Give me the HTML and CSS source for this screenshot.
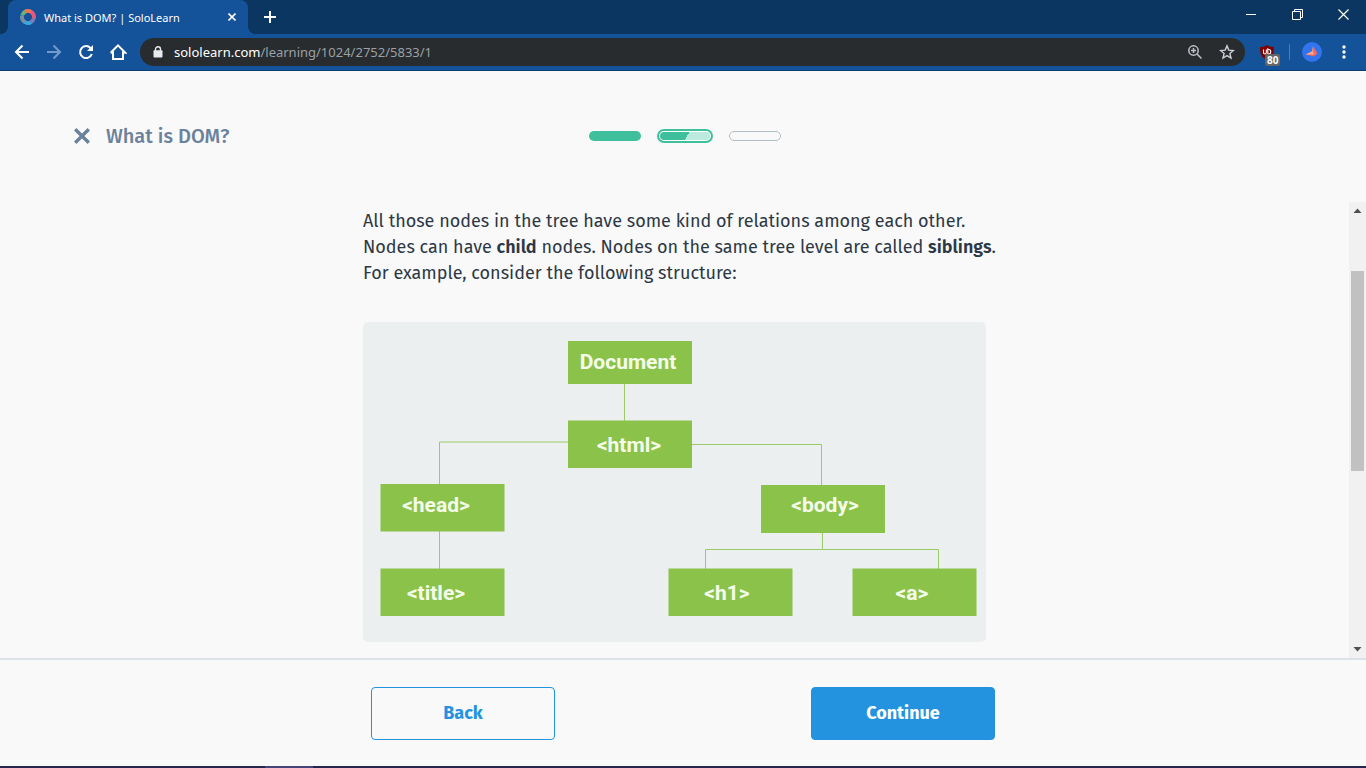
FILE: index.html
```html
<!DOCTYPE html>
<html lang="en">
<head>
<meta charset="utf-8">
<meta name="viewport" content="width=device-width, initial-scale=1">
<title>What is DOM? | SoloLearn</title>
<link rel="stylesheet" href="styles.css">
</head>
<body class="window">
<div class="tabstrip">
  <div class="tab">
    <svg class="tab-icon" width="16" height="16" viewBox="0 0 16 16" fill="none" stroke-width="3.600" aria-hidden="true">
      <circle cx="8" cy="8" r="6" stroke="#59809c"/>
      <path d="M2.4 6A6 6 0 0 1 7 2.1" stroke="#62b878"/>
      <path d="M5 2.8A6 6 0 0 1 12 3.6" stroke="#ee7455"/>
      <path d="M11 2.9A6 6 0 0 1 13.8 9.4" stroke="#e9577f"/>
      <path d="M13.7 9.8A6 6 0 0 1 9.8 13.7" stroke="#8277b9"/>
      <path d="M10.8 13.3A6 6 0 0 1 4 12.5" stroke="#36a9e1"/>
      <path d="M4.6 12.9A6 6 0 0 1 2 7" stroke="#7c8f9f"/>
    </svg>
    <span class="tab-title">What is DOM? | SoloLearn</span>
    <button class="tab-close" aria-label="Close tab">
      <svg width="8" height="8" viewBox="0 0 8 8" stroke="#fff" stroke-width="1.6"><path d="M0.5 0.5l7 7M7.5 0.5l-7 7"/></svg>
    </button>
  </div>
  <button class="tab-new" aria-label="New tab">
    <svg width="12" height="12" viewBox="0 0 12 12" stroke="#fff" stroke-width="2"><path d="M6 0v12M0 6h12"/></svg>
  </button>
  <div class="window-controls">
    <button class="window-button" aria-label="Minimize"><svg width="11" height="11" viewBox="0 0 11 11" stroke="#fff"><path d="M0 5.5h10"/></svg></button>
    <button class="window-button" aria-label="Restore"><svg width="11" height="11" viewBox="0 0 11 11" fill="none" stroke="#fff"><path d="M0.5 2.5h8v8h-8zM2.5 2.5v-2h8v8h-2"/></svg></button>
    <button class="window-button" aria-label="Close"><svg width="11" height="11" viewBox="0 0 11 11" stroke="#fff" stroke-width="1.2"><path d="M0.5 0.5l10 10M10.5 0.5l-10 10"/></svg></button>
  </div>
</div>

<div class="toolbar">
  <button class="tool" aria-label="Go back"><svg width="16" height="16" viewBox="0 0 16 16" fill="none" stroke="#fff" stroke-width="2"><path d="M15 8H2.5M8.5 1.5L2 8l6.500 6.500"/></svg></button>
  <button class="tool" aria-label="Go forward"><svg width="16" height="16" viewBox="0 0 16 16" fill="none" stroke="#739acc" stroke-width="2"><path d="M1 8h12.500M7.500 1.500L14 8l-6.500 6.500"/></svg></button>
  <button class="tool" aria-label="Reload"><svg width="16" height="16" viewBox="0 0 16 16" fill="none" stroke="#fff" stroke-width="2"><path d="M13.800 10A6 6 0 1 1 12.600 4.100"/><path d="M15 1v6H9z" fill="#fff" stroke="none"/></svg></button>
  <button class="tool" aria-label="Home"><svg width="18" height="18" viewBox="0 0 18 18" fill="none" stroke="#fff" stroke-width="2"><path d="M4 8.500V16h10V8.500M1.700 9.700L9 2.400l7.300 7.300H14M1.700 9.700H4"/></svg></button>
  <div class="address">
    <svg class="lock" width="10" height="12" viewBox="0 0 10 12" aria-hidden="true"><path d="M2.500 5V3.200a2.500 2.500 0 0 1 5 0V5" fill="none" stroke="#e8eaed" stroke-width="1.400"/><rect x="0.500" y="4.300" width="9" height="7.200" rx="1" fill="#e8eaed"/></svg>
    <div class="url" role="textbox" aria-label="Address" contenteditable="true" spellcheck="false"><span class="url-host">sololearn.com</span>/learning/1024/2752/5833/1</div>
    <button class="tool" aria-label="Zoom"><svg width="14" height="14" viewBox="0 0 14 14" fill="none" stroke="#bdc1c6" stroke-width="1.500"><circle cx="5.500" cy="5.500" r="4.700"/><path d="M9 9l4.500 4.500M5.500 3v5M3 5.500h5"/></svg></button>
    <button class="tool" aria-label="Bookmark this page"><svg width="16" height="16" viewBox="0 0 16 16" fill="none" stroke="#cdd0d4" stroke-width="1.400"><path d="M8 1.900l1.800 4.200 4.600.4-3.500 3 1.100 4.500L8 11.600 4 14l1.100-4.500-3.500-3 4.600-.4z"/></svg></button>
  </div>
  <button class="tool extension" aria-label="uBlock Origin">
    <svg width="14" height="15" viewBox="0 0 14 15"><path d="M7 0c2 1.500 4 2 7 2 0 7-1 10-7 13C1 12 0 9 0 2c3 0 5-.5 7-2z" fill="#800000"/><path d="M3.500 4.500v3q0 1.500 1.400 1.500T6.300 7.500v-3M7.800 4v5h1q2 0 2-2.200T8.800 4.500z" fill="none" stroke="#fff" stroke-width="1.100"/></svg>
    <span class="badge">80</span>
  </button>
  <span class="divider"></span>
  <button class="tool" aria-label="Profile"><svg width="20" height="20" viewBox="0 0 20 20"><circle cx="10" cy="10" r="10" fill="#3273ee"/><path d="M11 4l-1.500 7 2.500 2z" fill="#ff9b83"/><path d="M3.500 12.500L10 9.500l2 5z" fill="#ef6262"/><path d="M11 4l4.500 7.500-3.500 3z" fill="#ef6a66"/><path d="M3.500 12.500l6.500-3 2 3z" fill="#ffb09a"/></svg></button>
  <button class="tool" aria-label="Menu"><svg width="4" height="14" viewBox="0 0 4 14" fill="#fff"><circle cx="2" cy="2" r="1.700"/><circle cx="2" cy="7" r="1.700"/><circle cx="2" cy="12" r="1.700"/></svg></button>
</div>

<header class="lesson-header">
  <div class="lesson-title">
    <button class="lesson-close" aria-label="Close lesson"><svg width="16" height="16" viewBox="0 0 16 16" stroke="#6b829c" stroke-width="3.400"><path d="M1.200 1.200l13.600 13.600M14.800 1.200L1.200 14.800"/></svg></button>
    <h1 class="lesson-name">What is DOM?</h1>
  </div>
  <div class="steps">
    <span class="step step-done"></span>
    <span class="step-ring"><span class="step step-current"></span></span>
    <span class="step step-next"></span>
  </div>
</header>

<div class="scroll-area">
  <main class="lesson">
    <p class="lesson-text">All those nodes in the tree have some kind of relations among each other.<br>Nodes can have <b>child</b> nodes. Nodes on the same tree level are called <b>siblings</b>.<br>For example, consider the following structure:</p>
    <svg class="diagram" viewBox="0 0 623 320" role="img" aria-label="DOM tree">
      <g class="links">
        <path d="M261.500 62v37M205 120H76.500V163M76.500 209v38M329 122.500h129.500V164M459.500 210v18M342.500 247v-19.500h233V247"/>
      </g>
      <g class="nodes">
        <rect x="205" y="19" width="124" height="43"/>
        <rect x="205" y="98.500" width="124" height="47.500"/>
        <rect x="17.500" y="162" width="124" height="47.500"/>
        <rect x="398" y="163" width="124" height="48"/>
        <rect x="17.500" y="246.500" width="124" height="47.500"/>
        <rect x="305.500" y="246.500" width="124" height="47.500"/>
        <rect x="489.500" y="246.500" width="124" height="47.500"/>
      </g>
      <g class="labels">
        <text x="265" y="47">Document</text>
        <text x="266" y="130">&lt;html&gt;</text>
        <text x="73" y="190">&lt;head&gt;</text>
        <text x="462" y="190">&lt;body&gt;</text>
        <text x="73" y="278">&lt;title&gt;</text>
        <text x="364" y="278">&lt;h1&gt;</text>
        <text x="549" y="278">&lt;a&gt;</text>
      </g>
    </svg>
  </main>
  <div class="scrollbar" aria-hidden="true">
    <svg class="scroll-arrow" width="17" height="17" viewBox="0 0 17 17" fill="#505050"><path d="M8.500 6.500l4 4.500h-8z"/></svg>
    <div class="scroll-before"></div>
    <div class="scroll-thumb"></div>
    <div class="scroll-after"></div>
    <svg class="scroll-arrow" width="17" height="17" viewBox="0 0 17 17" fill="#505050"><path d="M8.500 10.500l4-4.500h-8z"/></svg>
  </div>
</div>

<footer class="lesson-footer">
  <div class="actions">
    <button class="action action-back">Back</button>
    <button class="action action-continue">Continue</button>
  </div>
</footer>
<div class="taskbar"><span class="taskbar-active"></span></div>
</body>
</html>
```
FILE: styles.css
```css
* {
  box-sizing: border-box;
}

.window {
  margin: 0;
  height: 100vh;
  display: flex;
  flex-direction: column;
  overflow: hidden;
  background: #f9f9f9;
  color: #2d3846;
  font-family: "Fira Sans", "Noto Sans", sans-serif;
}

button {
  display: flex;
  align-items: center;
  justify-content: center;
  padding: 0;
  border: 0;
  background: none;
  font: inherit;
  cursor: pointer;
}

/* Tab strip */
.tabstrip {
  display: flex;
  flex: none;
  height: 34px;
  padding-left: 8px;
  background: #0c3662;
}

.tab {
  position: relative;
  display: flex;
  align-items: center;
  width: 240px;
  padding: 0 8px 0 12px;
  border-radius: 8px 8px 0 0;
  background: #145299;
  color: #fff;
  font: 11px "Noto Sans", sans-serif;
}

.tab::before,
.tab::after {
  content: "";
  position: absolute;
  bottom: 0;
  width: 8px;
  height: 8px;
}

.tab::before {
  right: 100%;
  background: radial-gradient(circle at 0 0, transparent 8px, #145299 8px);
}

.tab::after {
  left: 100%;
  background: radial-gradient(circle at 100% 0, transparent 8px, #145299 8px);
}

.tab-title {
  flex: 1;
  margin-left: 8px;
  white-space: nowrap;
}

.tab-close {
  width: 16px;
  height: 16px;
}

.tab-new {
  width: 28px;
  margin-left: 8px;
}

.window-controls {
  display: flex;
  height: 29px;
  margin-left: auto;
}

.window-button {
  width: 46px;
}

/* Toolbar */
.toolbar {
  display: flex;
  flex: none;
  align-items: center;
  height: 37px;
  padding: 0 6px;
  border-bottom: 1px solid #0d3c70;
  background: #145299;
}

.tool {
  position: relative;
  flex: none;
  width: 32px;
  height: 28px;
}

.address {
  display: flex;
  flex: 1;
  align-items: center;
  height: 28px;
  margin-left: 6px;
  padding: 0 2px 0 13px;
  border-radius: 14px;
  background: #282c2f;
}

.url {
  flex: 1;
  margin-left: 11px;
  color: #9aa0a6;
  font: 13px "Noto Sans", sans-serif;
  white-space: nowrap;
}

.url-host {
  color: #fff;
}

.extension {
  margin: 0 6px;
}

.badge {
  position: absolute;
  left: 14px;
  bottom: 0;
  padding: 0 2px;
  border-radius: 2px;
  background: #666;
  color: #fff;
  font: bold 10px/12px "Open Sans", sans-serif;
}

.divider {
  width: 1px;
  height: 16px;
  margin-right: 6px;
  background: #4a7db8;
}

/* Lesson header */
.lesson-header {
  display: grid;
  grid-template-columns: 1fr auto 1fr;
  flex: none;
  align-items: center;
  height: 131px;
  padding: 0 68px 2px 72px;
}

.lesson-title {
  display: flex;
  align-items: center;
  gap: 14px;
}

.lesson-close {
  width: 20px;
  height: 20px;
}

.lesson-name {
  margin: 0;
  color: #6b829c;
  font-size: 20px;
  font-weight: 500;
  line-height: 26px;
}

.steps {
  display: flex;
  align-items: center;
  gap: 16px;
}

.step {
  display: block;
  width: 52px;
  height: 10px;
  border-radius: 5px;
}

.step-done {
  background: #40bf9c;
}

.step-ring {
  padding: 1px;
  border: 2px solid #40bf9c;
  border-radius: 7px;
  background: #fff;
}

.step-current {
  width: 50px;
  height: 8px;
  background: linear-gradient(120deg, #40bf9c 54%, #bdeadf 54%);
}

.step-next {
  border: 1px solid #b0bec5;
}

/* Lesson body */
.scroll-area {
  display: flex;
  flex: 1;
  min-height: 0;
}

.lesson {
  flex: 1;
  padding: 6px 16px 0;
  overflow: hidden;
}

.lesson-text {
  max-width: 623px;
  margin: 0 auto 36px;
  font-size: 18px;
  line-height: 26px;
  white-space: nowrap;
}

.lesson-text b {
  font-weight: 600;
}

.diagram {
  display: block;
  width: 100%;
  max-width: 623px;
  margin: 0 auto;
  border-radius: 5px;
  background: #ebeff0;
}

.links {
  fill: none;
  stroke: #9bca6b;
}

.nodes {
  fill: #8bc34a;
}

.labels {
  fill: #f5fbea;
  font: bold 21px Roboto, sans-serif;
  text-anchor: middle;
}

.scrollbar {
  display: flex;
  flex: none;
  flex-direction: column;
  width: 17px;
  background: #f1f1f1;
}

.scroll-arrow {
  flex: none;
}

.scroll-before {
  flex: 52;
}

.scroll-thumb {
  flex: 200;
  margin: 0 2px;
  background: #c1c1c1;
}

.scroll-after {
  flex: 170;
}

/* Footer */
.lesson-footer {
  flex: none;
  padding: 27px 16px 26px;
  border-top: 2px solid #dce2e7;
}

.actions {
  display: flex;
  justify-content: space-between;
  max-width: 624px;
  margin: 0 auto;
}

.action {
  width: 184px;
  height: 53px;
  padding-bottom: 2px;
  border: 1px solid #2493df;
  border-radius: 4px;
  font-size: 18px;
  font-weight: 700;
}

.action-back {
  color: #2493df;
}

.action-continue {
  background: #2493df;
  color: #fff;
}

.taskbar {
  flex: none;
  height: 2px;
  padding-left: 265px;
  background: #28264d;
}

.taskbar-active {
  display: block;
  width: 48px;
  height: 2px;
  background: #464579;
}
```
